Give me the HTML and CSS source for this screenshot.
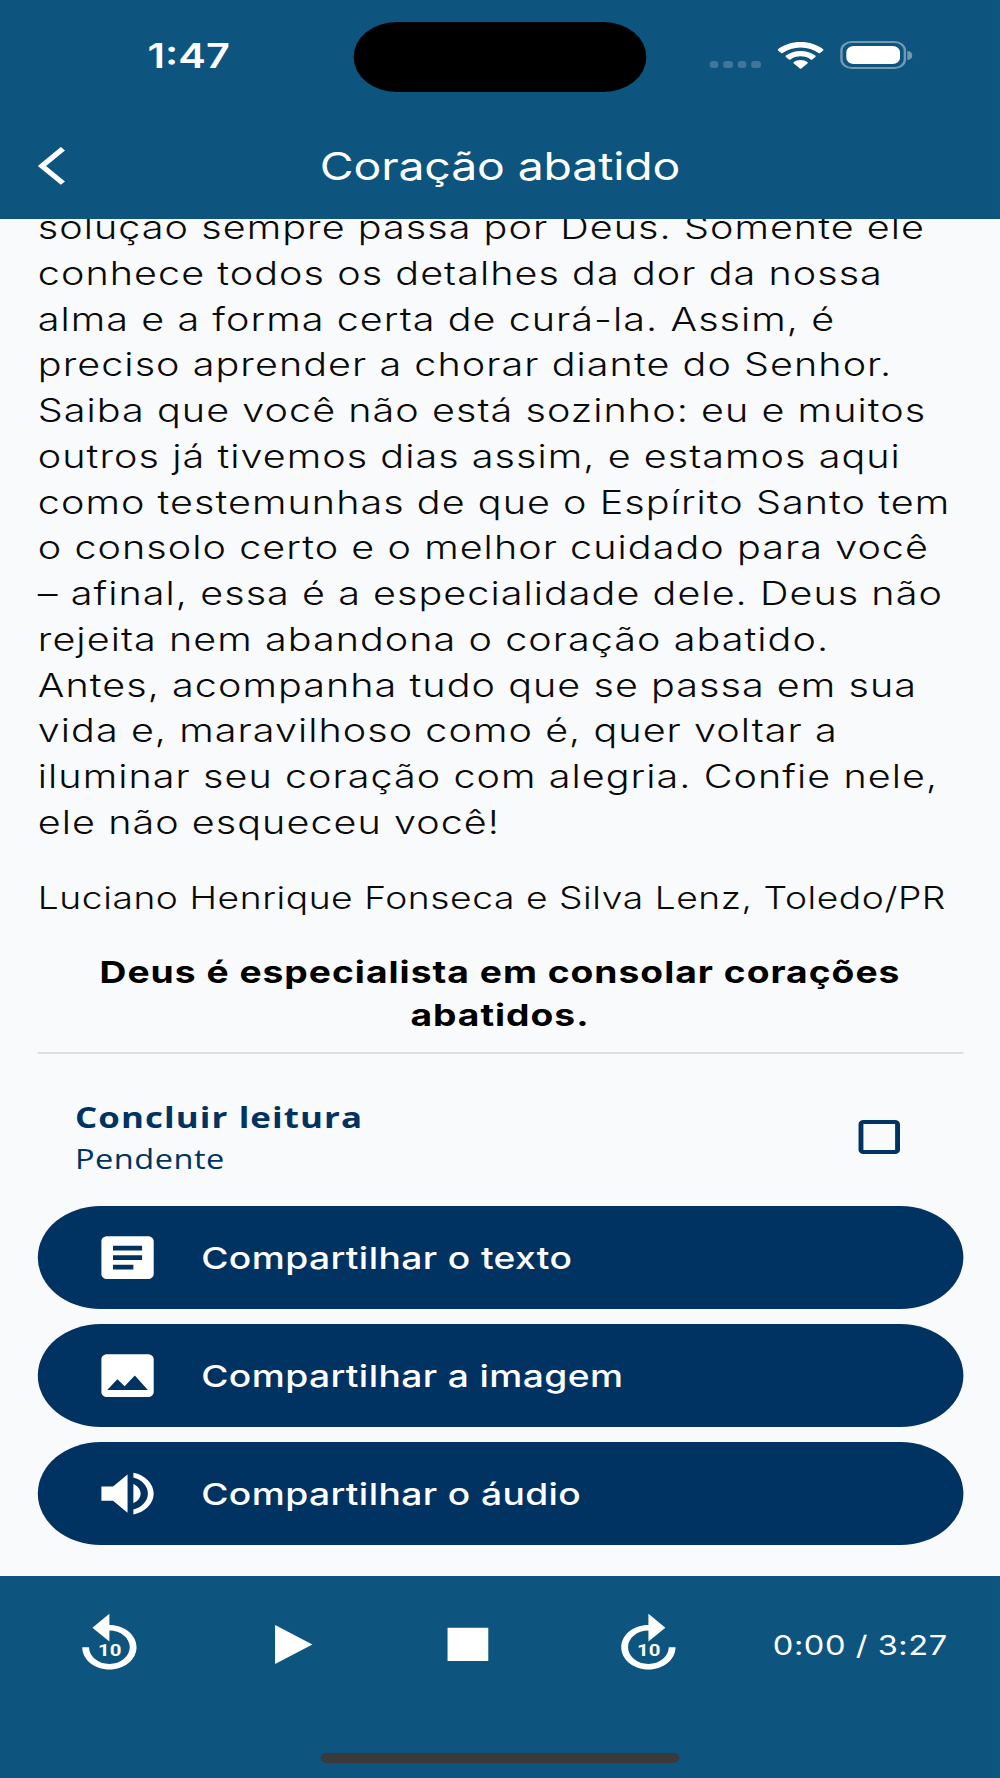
FILE: index.html
```
<!DOCTYPE html>
<html lang="pt-BR">
<head>
    <meta charset="UTF-8">
    <title>Coração abatido</title>
    <link rel="stylesheet" href="styles.css">
</head>
<body>
    <div class="screen">
        <header class="header">
            <div class="status-bar">
                <span class="clock">1:47</span>
                <div class="island"></div>
                <div class="status-icons">
                    <div class="signal"><i></i><i></i><i></i><i></i></div>
                    <svg class="wifi" viewBox="0 0 37 27">
                        <path d="M18.5 0C25.7 0 32.2 2.7 37 7.2a1 1 0 0 1 0 1.3l-2.5 2.5a1 1 0 0 1-1.3 0C29.3 7.5 24.2 5.4 18.5 5.4S7.7 7.5 3.8 11a1 1 0 0 1-1.3 0L0 8.5a1 1 0 0 1 0-1.3C4.8 2.7 11.3 0 18.5 0z"/>
                        <path d="M18.5 9c4.7 0 8.9 1.7 12.1 4.6a1 1 0 0 1 0 1.3l-2.5 2.5a1 1 0 0 1-1.3 0c-2.2-2-5.1-3.2-8.3-3.2s-6.1 1.2-8.3 3.2a1 1 0 0 1-1.3 0l-2.5-2.5a1 1 0 0 1 0-1.3C9.6 10.7 13.8 9 18.5 9z"/>
                        <path d="M18.5 18c2.2 0 4.1.8 5.6 2a1 1 0 0 1 0 1.4l-5 5.2a.9.9 0 0 1-1.2 0l-5-5.2a1 1 0 0 1 0-1.4c1.5-1.2 3.4-2 5.6-2z"/>
                    </svg>
                    <div class="battery"><div class="battery-level"></div></div>
                </div>
            </div>
            <div class="title-bar">
                <svg class="back" viewBox="0 0 24 24"><path d="M11.67 3.87L9.9 2.1 0 12l9.9 9.9 1.77-1.77L3.54 12z"/></svg>
                <h1>Coração abatido</h1>
            </div>
        </header>

        <main class="content">
            <p class="text">
                solução sempre passa por Deus. Somente ele<br>
                conhece todos os detalhes da dor da nossa<br>
                alma e a forma certa de curá-la. Assim, é<br>
                preciso aprender a chorar diante do Senhor.<br>
                Saiba que você não está sozinho: eu e muitos<br>
                outros já tivemos dias assim, e estamos aqui<br>
                como testemunhas de que o Espírito Santo tem<br>
                o consolo certo e o melhor cuidado para você<br>
                – afinal, essa é a especialidade dele. Deus não<br>
                rejeita nem abandona o coração abatido.<br>
                Antes, acompanha tudo que se passa em sua<br>
                vida e, maravilhoso como é, quer voltar a<br>
                iluminar seu coração com alegria. Confie nele,<br>
                ele não esqueceu você!
            </p>
            <p class="author">Luciano Henrique Fonseca e Silva Lenz, Toledo/PR</p>
            <p class="highlight">Deus é especialista em consolar corações<br>abatidos.</p>
            <hr>
            <label class="reading">
                <div>
                    <div class="reading-title">Concluir leitura</div>
                    <div class="reading-status">Pendente</div>
                </div>
                <span class="checkbox"></span>
            </label>
            <div class="actions">
                <button>
                    <svg viewBox="0 0 24 24"><path d="M19 3H5c-1.1 0-2 .9-2 2v14c0 1.1.9 2 2 2h14c1.1 0 2-.9 2-2V5c0-1.1-.9-2-2-2zm-5 14H7v-2h7v2zm3-4H7v-2h10v2zm0-4H7V7h10v2z"/></svg>
                    Compartilhar o texto
                </button>
                <button>
                    <svg viewBox="0 0 24 24"><path d="M21 19V5c0-1.1-.9-2-2-2H5c-1.1 0-2 .9-2 2v14c0 1.1.9 2 2 2h14c1.1 0 2-.9 2-2zM8.5 13.5l2.5 3.01L14.5 12l4.5 6H5l3.5-4.5z"/></svg>
                    Compartilhar a imagem
                </button>
                <button>
                    <svg viewBox="0 0 24 24"><path d="M3 9v6h4l5 5V4L7 9H3zm13.5 3c0-1.77-1.02-3.29-2.5-4.03v8.05c1.48-.73 2.5-2.25 2.5-4.02zM14 3.23v2.06c2.89.86 5 3.54 5 6.71s-2.11 5.85-5 6.71v2.06c4.01-.91 7-4.49 7-8.77s-2.99-7.86-7-8.77z"/></svg>
                    Compartilhar o áudio
                </button>
            </div>
        </main>

        <footer class="player">
            <div class="controls">
                <svg viewBox="0 0 24 24"><path d="M12 5V1L7 6l5 5V7c3.31 0 6 2.69 6 6s-2.69 6-6 6-6-2.69-6-6H4c0 4.42 3.58 8 8 8s8-3.58 8-8-3.58-8-8-8z"/><text x="12.1" y="16.1">10</text></svg>
                <svg viewBox="0 0 24 24"><path d="M8 5v14l11-7z"/></svg>
                <svg viewBox="0 0 24 24"><path d="M6 6h12v12H6z"/></svg>
                <svg viewBox="0 0 24 24"><path d="M12 5V1l5 5-5 5V7c-3.31 0-6 2.69-6 6s2.69 6 6 6 6-2.69 6-6h2c0 4.42-3.58 8-8 8s-8-3.58-8-8 3.58-8 8-8z"/><text x="12.1" y="16.1">10</text></svg>
            </div>
            <span class="time">0:00 / 3:27</span>
            <div class="home-indicator"></div>
        </footer>
    </div>
</body>
</html>
```
FILE: styles.css
```
* { box-sizing: border-box; }
body { margin: 0; background: #f9fafc; overflow: hidden; }
p, h1 { margin: 0; }

.screen {
    width: 820px;
    height: 1778px;
    display: flex;
    flex-direction: column;
    transform: scaleX(1.2195);
    transform-origin: 0 0;
    font-family: Inter, "Liberation Sans", sans-serif;
    color: #0a0a0a;
    overflow: hidden;
}

/* header */
.header { height: 219px; flex: none; background: #0d547e; color: #fff; }
.status-bar {
    height: 112px;
    display: grid;
    grid-template-columns: 290px 240px 290px;
    align-items: center;
}
.clock { padding: 0 0 1px 121px; font-size: 34px; font-weight: 600; }
.island { height: 70px; margin-top: 1px; border-radius: 35px; background: #000; }
.status-icons { display: flex; align-items: center; padding: 0 0 2px 52px; }
.signal { display: flex; gap: 4.2px; margin-top: 19px; }
.signal i { width: 7.3px; height: 7.5px; border-radius: 2.5px; background: #3f7699; }
.wifi { width: 37px; height: 27px; margin-left: 14px; fill: #fff; overflow: visible; }
.battery {
    position: relative;
    width: 54px;
    height: 28px;
    margin-left: 14px;
    padding: 3px;
    border: 2px solid #7099b3;
    border-radius: 9.5px;
}
.battery::after {
    content: "";
    position: absolute;
    right: -7.5px;
    top: 7.5px;
    width: 4px;
    height: 9px;
    border-radius: 0 4px 4px 0;
    background: #7099b3;
}
.battery-level { height: 100%; border-radius: 6px; background: #fff; }
.title-bar { position: relative; height: 107px; display: flex; align-items: center; justify-content: center; }
.title-bar h1 { font-size: 38px; font-weight: 400; line-height: 46px; letter-spacing: -0.1px; }
.back { position: absolute; left: 30.5px; top: 31px; width: 45.8px; height: 45.8px; fill: #fff; }

/* reading */
.content { height: 1356.5px; flex: none; padding: 0 30.5px; background: #f9fafc; overflow: hidden; }
.text { margin: -14px 0 0 0.5px; font-size: 32.4px; font-weight: 350; line-height: 45.77px; letter-spacing: 0.87px; white-space: nowrap; }
.author { margin: 30px 0 0 0.5px; font-size: 30.5px; font-weight: 350; line-height: 43.5px; letter-spacing: 0.46px; white-space: nowrap; }
.highlight { margin-top: 30.5px; font-size: 30.5px; font-weight: 700; line-height: 43.5px; letter-spacing: 0.82px; text-align: center; color: #000; }
hr { height: 2px; margin: 15px 0 0; border: 0; background: #dfdfe1; }
.reading {
    height: 152px;
    padding: 16px 51.5px 0 31px;
    display: flex;
    align-items: center;
    justify-content: space-between;
    color: #003362;
    font-family: "Open Sans", "Noto Sans", sans-serif;
}
.reading-title { font-size: 28.6px; font-weight: 700; line-height: 42px; letter-spacing: 0.9px; }
.reading-status { font-size: 26.7px; line-height: 41px; letter-spacing: 0.4px; }
.checkbox { width: 34.3px; height: 34.3px; margin-bottom: 1px; border: 4px solid #003362; border-radius: 4px; }

.actions { display: flex; flex-direction: column; gap: 15.3px; }
button {
    height: 103px;
    padding: 0 45.8px;
    display: flex;
    align-items: center;
    gap: 31.5px;
    border: 0;
    border-radius: 51.5px;
    background: #003362;
    color: #fff;
    font: 500 30.5px Inter, "Liberation Sans", sans-serif;
    letter-spacing: 0.32px;
}
button svg { width: 57.2px; height: 57.2px; fill: #fff; }

/* audio player */
.player {
    position: relative;
    flex: 1;
    padding-left: 15.6px;
    display: flex;
    align-items: flex-start;
    background: #0d547e;
    color: #fff;
}
.controls { display: flex; margin-top: 35.5px; }
.controls svg { width: 147.4px; height: 66.8px; fill: #fff; }
.controls text { font: 700 6px Roboto, sans-serif; text-anchor: middle; }
.time { margin: 53px 0 0 28.6px; font-size: 26.7px; line-height: 32px; letter-spacing: 0.45px; white-space: nowrap; }
.home-indicator {
    position: absolute;
    left: 263.3px;
    bottom: 15.5px;
    width: 293.4px;
    height: 9.5px;
    border-radius: 5px;
    background: #3a3a3a;
}
```
